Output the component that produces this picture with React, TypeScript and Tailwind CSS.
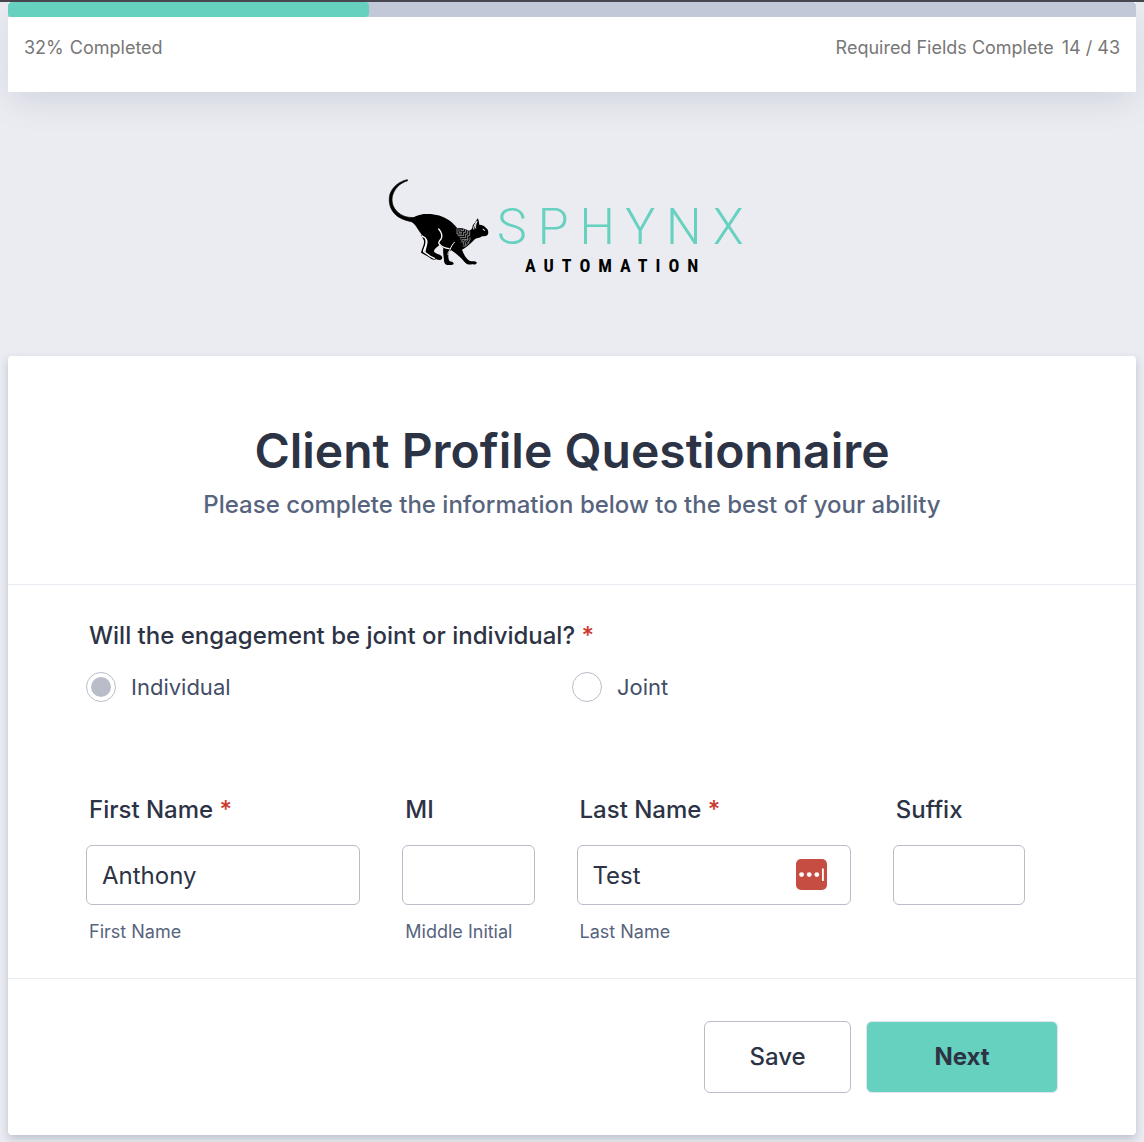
import { useState } from 'react'
import type { InputHTMLAttributes } from 'react'

const progress = { percent: 32, done: 14, total: 43 }

function CatMark() {
  return (
    <svg viewBox="0 0 351 315" className="h-[105px] w-[117px] shrink-0" aria-hidden="true">
      {/* tail */}
      <path
        d="M82 29C58 34 38 50 30 72C23 98 32 125 54 140C68 149 84 153 98 156L112 142C94 144 76 142 63 134C42 121 33 101 37 79C43 56 58 40 83 32Z"
        fill="#000"
        stroke="#000"
        strokeWidth="2"
        strokeLinejoin="round"
      />
      {/* body and head */}
      <path
        d="M92 146C106 140 118 132 138 132C165 131 188 138 206 150C218 158 226 167 232 175C246 172 258 179 267 182C273 180 275 177 277 173C277 166 281 160 285 158L293 145C297 151 297 158 298 164C308 164 314 168 318 174C324 178 326 184 324 193C321 199 312 199 306 199C298 206 290 202 280 212C268 224 258 232 246 239C251 253 259 267 268 272C276 275 285 271 290 277C291 284 284 284 276 283C266 285 259 282 253 275C241 260 228 251 214 241C208 242 206 246 206 251C204 260 205 268 209 274C215 275 222 277 221 282C219 286 209 285 201 285C194 283 192 277 192 271C191 257 188 246 190 234L178 224C170 234 162 236 162 244C165 252 176 252 184 257C188 262 188 268 181 270C172 271 165 266 156 262C147 259 138 254 137 246C137 236 144 224 142 211C132 199 125 195 119 186C111 174 105 163 96 157Z"
        fill="#000"
      />
      {/* far hind leg */}
      <path
        d="M122 192L135 204C140 220 132 233 131 242L148 256C156 264 164 264 168 268C160 271 153 267 146 261L123 248C125 236 134 223 132 212Z"
        fill="#000"
      />
      <g fill="none" stroke="#fff" strokeLinecap="round" strokeLinejoin="round">
        <path d="M127 199C136 202 142 207 139 221C136 232 130 239 131 245L151 259L163 265" strokeWidth="4" />
        <path d="M176 177C185 187 188 198 183 207C177 214 173 219 180 224C188 233 197 235 207 236" strokeWidth="4" />
        <path d="M223 217C217 223 213 231 209 241C205 245 204 249 204 254" strokeWidth="3" />
        <path d="M281 177C281 168 285 161 291 154C287 162 286 168 287 174" strokeWidth="3" />
        <path d="M309 178L314 181" strokeWidth="3" />
      </g>
      {/* chest pattern */}
      <g fill="none" stroke="#c4c4c8" strokeWidth="2">
        <path d="M231 175V192H246M237 175V187H246M243 176V182H251V176" />
        <path d="M233 197H251V187H257V178M239 203H257V192H263V181M246 209H263V197H269V184" />
        <path d="M270 202V210L262 220M264 209L256 217V226M257 209L250 216V224" />
        <path d="M241 208L248 213L243 218M248 228H257L268 216" />
      </g>
    </svg>
  )
}

function Logo() {
  return (
    <div className="flex w-[384px]" role="img" aria-label="Sphynx Automation">
      <CatMark />
      <div className="pt-8">
        <div className="font-[Roboto] text-[50px] leading-[50px] font-light tracking-[11px] text-[#66d1be]">SPHYNX</div>
        <div className="pl-7 font-['Roboto_Condensed','Liberation_Sans_Narrow','Liberation_Sans',sans-serif] text-lg leading-7 font-bold tracking-[8px] text-black">
          AUTOMATION
        </div>
      </div>
    </div>
  )
}

function Required() {
  return <span className="text-[#cb3a2f]"> *</span>
}

type FieldProps = InputHTMLAttributes<HTMLInputElement> & {
  id: string
  label: string
  hint?: string
  filler?: boolean
}

function Field({ id, label, hint, filler, required, ...props }: FieldProps) {
  return (
    <div className="min-w-0">
      <label htmlFor={id} className="block pl-[3px] text-2xl leading-8 font-medium">
        {label}
        {required && <Required />}
      </label>
      <div className="relative mt-[19px]">
        <input
          id={id}
          type="text"
          className="h-[60px] w-full rounded-md border border-[#b8bdc9] bg-white px-[15px] text-2xl text-[#2c3345] outline-none focus:border-[#66d1be]"
          {...props}
        />
        {filler && (
          <svg viewBox="0 0 31 31" className="absolute top-[14px] right-6 size-[31px]" aria-hidden="true">
            <rect width="31" height="31" rx="5" fill="#c64d42" />
            <g fill="#fff">
              <circle cx="5.6" cy="15.6" r="2.4" />
              <circle cx="13.2" cy="15.6" r="2.4" />
              <circle cx="20.8" cy="15.6" r="2.4" />
              <rect x="26" y="9.5" width="1.8" height="12.5" />
            </g>
          </svg>
        )}
      </div>
      {hint && <div className="mt-[15px] pl-[3px] text-lg leading-6 text-[#57647e]">{hint}</div>}
    </div>
  )
}

export default function App() {
  const [engagement, setEngagement] = useState('Individual')
  const [firstName, setFirstName] = useState('Anthony')
  const [lastName, setLastName] = useState('Test')

  return (
    <div className="min-h-screen border-t-2 border-[#47464f] bg-[#ebecf2] px-2 pb-[7px] font-[Inter,sans-serif] text-[#2c3345]">
      <header className="bg-white shadow-[0_12px_32px_-4px_rgba(87,100,126,0.18)]">
        <div className="h-[15px] overflow-hidden rounded-t bg-[#c3c8d8]">
          <div className="h-full rounded bg-[#66d1be]" style={{ width: `${progress.percent}%` }} />
        </div>
        <div className="flex h-[75px] justify-between px-4 pt-[19px] text-lg leading-6 text-[#777]">
          <div className="flex gap-1.5">
            <span>{progress.percent}%</span>
            <span>Completed</span>
          </div>
          <div className="flex gap-2">
            <span>Required Fields Complete</span>
            <span>
              {progress.done} / {progress.total}
            </span>
          </div>
        </div>
      </header>

      <div className="flex h-[264px] justify-center pt-[78px]">
        <Logo />
      </div>

      <form
        className="rounded bg-white shadow-[0_4px_8px_rgba(87,100,126,0.3)]"
        onSubmit={(e) => e.preventDefault()}
      >
        <div className="border-b border-[#e9eaf2] pt-[65px] pb-[63px] text-center">
          <h1 className="text-5xl leading-[60px] font-semibold">Client Profile Questionnaire</h1>
          <p className="mt-2 text-2xl leading-8 font-medium text-[#57647e]">
            Please complete the information below to the best of your ability
          </p>
        </div>

        <div className="px-[78px] pt-[35px] pb-[34px]">
          <fieldset>
            <legend className="pl-[3px] text-2xl leading-8 font-medium">
              Will the engagement be joint or individual?
              <Required />
            </legend>
            <div className="mt-5 grid grid-cols-2">
              {['Individual', 'Joint'].map((option) => (
                <label key={option} className="flex h-[30px] items-center gap-[15px] text-[22px] text-[#434e66]">
                  <input
                    type="radio"
                    name="engagement"
                    value={option}
                    checked={engagement === option}
                    onChange={() => setEngagement(option)}
                    className="size-[30px] shrink-0 appearance-none rounded-full border border-[#b8bdc9] bg-white bg-clip-content p-1 checked:bg-[#b8bdc9]"
                  />
                  {option}
                </label>
              ))}
            </div>
          </fieldset>

          <div className="mt-[92px] grid grid-cols-[274fr_132fr_274fr_132fr] gap-[42px] pr-[33px]">
            <Field
              id="first-name"
              label="First Name"
              hint="First Name"
              required
              value={firstName}
              onChange={(e) => setFirstName(e.target.value)}
            />
            <Field id="middle-initial" label="MI" hint="Middle Initial" />
            <Field
              id="last-name"
              label="Last Name"
              hint="Last Name"
              required
              filler
              value={lastName}
              onChange={(e) => setLastName(e.target.value)}
            />
            <Field id="suffix" label="Suffix" />
          </div>
        </div>

        <div className="flex justify-end gap-[15px] border-t border-[#e9eaf2] px-[78px] py-[42px]">
          <button type="button" className="h-[72px] w-[147px] rounded-md border border-[#b8bdc9] bg-white text-2xl font-medium">
            Save
          </button>
          <button type="submit" className="h-[72px] w-[192px] rounded-md border border-[#e3e5f0] bg-[#66d1be] text-2xl font-bold">
            Next
          </button>
        </div>
      </form>
    </div>
  )
}
